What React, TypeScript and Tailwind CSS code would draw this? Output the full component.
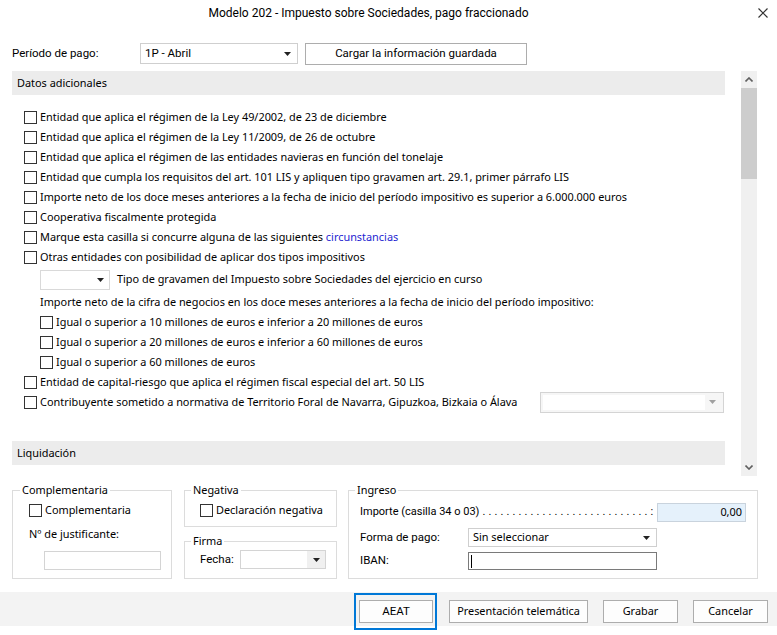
import type { ReactNode } from "react";

const wide = "font-['Noto_Sans',sans-serif] text-[10.9px]";
const narrow = "font-['Roboto',sans-serif] text-[11.5px]";

function Arrow({ color = "#222" }: { color?: string }) {
  return (
    <svg width="7" height="4" viewBox="0 0 7 4">
      <polygon points="0,0 7,0 3.5,4" fill={color} />
    </svg>
  );
}

function Check() {
  return <span className="inline-block h-[13px] w-[13px] shrink-0 border border-[#333] bg-white" />;
}

function CheckRow({ children, indent = "pl-[12px]" }: { children: ReactNode; indent?: string }) {
  return (
    <div className={`flex h-5 items-center gap-[3px] ${indent}`}>
      <Check />
      <span className="whitespace-nowrap">{children}</span>
    </div>
  );
}

function GrayBar({ title }: { title: string }) {
  return <div className="flex h-[24px] items-center bg-[#ececec] pl-[5px] text-black">{title}</div>;
}

function Legend({ children, ml }: { children: ReactNode; ml: string }) {
  return <legend className={`px-[2px] leading-[14px] ${ml}`}>{children}</legend>;
}

function Btn({ children, w, font = wide }: { children: ReactNode; w: string; font?: string }) {
  return (
    <button className={`flex h-[23px] items-center justify-center border border-[#adadad] bg-[#fdfdfd] text-black ${font} ${w}`}>
      {children}
    </button>
  );
}

export default function App() {
  return (
    <div className={`flex h-[635px] w-[777px] flex-col overflow-hidden bg-white text-black ${wide}`}>
      {/* title */}
      <div className="flex h-[26px] items-center">
        <div className="flex w-[737px] justify-center font-['Roboto',sans-serif] text-[12px]">
          Modelo 202 - Impuesto sobre Sociedades, pago fraccionado
        </div>
        <svg className="ml-[21px]" width="10" height="10" viewBox="0 0 10 10">
          <path d="M0.5 0.5 L9.5 9.5 M9.5 0.5 L0.5 9.5" stroke="#333" strokeWidth="1.2" />
        </svg>
      </div>

      {/* periodo */}
      <div className={`mt-[17px] flex items-start pl-[12px] ${narrow}`}>
        <div className="flex h-[21px] w-[128px] items-center">Período de pago:</div>
        <div className="flex h-[21px] w-[158px] items-center justify-between border border-[#cfcfcf] bg-white pl-[4px] pr-[6px]">
          <span>1P - Abril</span>
          <Arrow />
        </div>
        <button className="ml-[7px] flex h-[22px] w-[222px] items-center justify-center border border-[#adadad] bg-white">
          Cargar la información guardada
        </button>
      </div>

      {/* scroll area */}
      <div className="mt-[6px] flex h-[405px] shrink-0 overflow-hidden pl-[12px]">
        <div className="w-[713px] shrink-0">
          <GrayBar title="Datos adicionales" />
          <div className="pt-[12px]">
            <CheckRow>Entidad que aplica el régimen de la Ley 49/2002, de 23 de diciembre</CheckRow>
            <CheckRow>Entidad que aplica el régimen de la Ley 11/2009, de 26 de octubre</CheckRow>
            <CheckRow>Entidad que aplica el régimen de las entidades navieras en función del tonelaje</CheckRow>
            <CheckRow>Entidad que cumpla los requisitos del art. 101 LIS y apliquen tipo gravamen art. 29.1, primer párrafo LIS</CheckRow>
            <CheckRow>
              Importe neto de los doce meses anteriores a la fecha de inicio del período impositivo es superior a 6.000.000 euros
            </CheckRow>
            <CheckRow>Cooperativa fiscalmente protegida</CheckRow>
            <CheckRow>
              Marque esta casilla si concurre alguna de las siguientes <span className="text-[#1f1fd1]">circunstancias</span>
            </CheckRow>
            <CheckRow>Otras entidades con posibilidad de aplicar dos tipos impositivos</CheckRow>
            <div className="flex h-[25px] items-center pl-[28px]">
              <div className="flex h-[20px] w-[70px] items-center justify-end border border-[#d9d9d9] bg-white pr-[5px]">
                <Arrow />
              </div>
              <span className="ml-[7px]">Tipo de gravamen del Impuesto sobre Sociedades del ejercicio en curso</span>
            </div>
            <div className="flex h-5 items-center pl-[28px]">
              Importe neto de la cifra de negocios en los doce meses anteriores a la fecha de inicio del período impositivo:
            </div>
            <CheckRow indent="pl-[28px]">Igual o superior a 10 millones de euros e inferior a 20 millones de euros</CheckRow>
            <CheckRow indent="pl-[28px]">Igual o superior a 20 millones de euros e inferior a 60 millones de euros</CheckRow>
            <CheckRow indent="pl-[28px]">Igual o superior a 60 millones de euros</CheckRow>
            <CheckRow>Entidad de capital-riesgo que aplica el régimen fiscal especial del art. 50 LIS</CheckRow>
            <div className="flex h-5 items-center pl-[12px]">
              <Check />
              <span className="ml-[3px] whitespace-nowrap">
                Contribuyente sometido a normativa de Territorio Foral de Navarra, Gipuzkoa, Bizkaia o Álava
              </span>
              <div className="ml-auto mr-[1px] flex h-[21px] w-[184px] items-center border border-[#d4d4d4] bg-[#f6f6f6] pl-[2px] pr-[7px]">
                <div className="h-[15px] w-[162px] bg-white" />
                <span className="ml-auto">
                  <Arrow color="#a0a0a0" />
                </span>
              </div>
            </div>
          </div>
          <div className="mt-[29px]">
            <GrayBar title="Liquidación" />
          </div>
        </div>

        {/* scrollbar */}
        <div className="ml-[16px] flex w-[16px] shrink-0 flex-col bg-[#f0f0f0]">
          <div className="flex h-[17px] items-center justify-center">
            <svg width="8" height="5" viewBox="0 0 8 5">
              <path d="M0.5 4.5 L4 1 L7.5 4.5" stroke="#606060" strokeWidth="1.6" fill="none" />
            </svg>
          </div>
          <div className="h-[91px] bg-[#cdcdcd]" />
          <div className="flex-1" />
          <div className="flex h-[17px] items-center justify-center">
            <svg width="8" height="5" viewBox="0 0 8 5">
              <path d="M0.5 0.5 L4 4 L7.5 0.5" stroke="#606060" strokeWidth="1.6" fill="none" />
            </svg>
          </div>
        </div>
      </div>

      {/* groups */}
      <div className="mt-[7px] flex items-start pl-[12px]">
        <fieldset className="h-[96px] w-[160px] min-w-0 shrink-0 border border-[#dcdcdc] pl-[16px]">
          <Legend ml="-ml-[9px]">Complementaria</Legend>
          <div className="mt-[3px] flex h-5 items-center gap-[3px]">
            <Check />
            <span>Complementaria</span>
          </div>
          <div className="mt-[4px] flex h-5 items-center">Nº de justificante:</div>
          <div className="ml-[15px] mt-[7px] h-[19px] w-[117px] border border-[#d4d4d4] bg-white" />
        </fieldset>

        <div className="ml-[12px] flex w-[153px] shrink-0 flex-col">
          <fieldset className="h-[44px] min-w-0 border border-[#dcdcdc] pl-[15px]">
            <Legend ml="-ml-[9px]">Negativa</Legend>
            <div className="mt-[3px] flex h-5 items-center gap-[3px]">
              <Check />
              <span>Declaración negativa</span>
            </div>
          </fieldset>
          <fieldset className="mt-[7px] h-[45px] min-w-0 border border-[#dcdcdc] pl-[15px]">
            <Legend ml="-ml-[9px]">Firma</Legend>
            <div className="mt-[2px] flex items-center">
              <span className={`w-[40px] ${narrow}`}>Fecha:</span>
              <div className="flex h-[19px] w-[86px] items-center justify-end border border-[#d4d4d4] bg-white">
                <div className="flex h-full w-[18px] items-center justify-center bg-[#f0f0f0]">
                  <Arrow />
                </div>
              </div>
            </div>
          </fieldset>
        </div>

        <fieldset className="ml-[11px] h-[96px] w-[410px] min-w-0 shrink-0 border border-[#dcdcdc] pl-[11px] pr-[11px]">
          <Legend ml="-ml-[5px]">Ingreso</Legend>
          <div className="mt-[6px] flex h-[19px] items-center font-['Roboto',sans-serif] text-[11px]">
            <span className="whitespace-nowrap">Importe (casilla 34 o 03)</span>
            <span className="ml-[3px] whitespace-nowrap tracking-[3.1px]">............................</span>
            <span>:</span>
            <div className={`ml-auto flex h-[19px] w-[89px] shrink-0 items-center justify-end border border-[#c9d3dd] bg-[#e5f1fb] pr-[3px] ${wide}`}>
              0,00
            </div>
          </div>
          <div className="mt-[6px] flex h-[19px] items-center">
            <span className={`w-[108px] ${narrow}`}>Forma de pago:</span>
            <div className="flex h-[19px] w-[189px] items-center justify-between border border-[#cfcfcf] bg-white pl-[4px] pr-[6px]">
              <span>Sin seleccionar</span>
              <Arrow />
            </div>
          </div>
          <div className="mt-[5px] flex h-[18px] items-center">
            <span className={`w-[108px] ${narrow}`}>IBAN:</span>
            <div className="flex h-[18px] w-[189px] items-center border border-[#7a7a7a] bg-white pl-[2px]">
              <span className="h-[13px] w-[1px] bg-black" />
            </div>
          </div>
        </fieldset>
      </div>

      {/* bottom bar */}
      <div className="mt-[13px] flex h-[34px] shrink-0 items-start justify-end bg-[#f3f3f3] pr-[9px] pt-[8px]">
        <div className="-mt-[7px] border-2 border-[#0078d7] py-[5px] pl-[3px] pr-[2px]">
          <Btn w="w-[74px]" font={narrow}>
            AEAT
          </Btn>
        </div>
        <div className="ml-[12px]">
          <Btn w="w-[139px]">Presentación telemática</Btn>
        </div>
        <div className="ml-[15px]">
          <Btn w="w-[75px]">Grabar</Btn>
        </div>
        <div className="ml-[15px]">
          <Btn w="w-[75px]">Cancelar</Btn>
        </div>
      </div>
    </div>
  );
}
